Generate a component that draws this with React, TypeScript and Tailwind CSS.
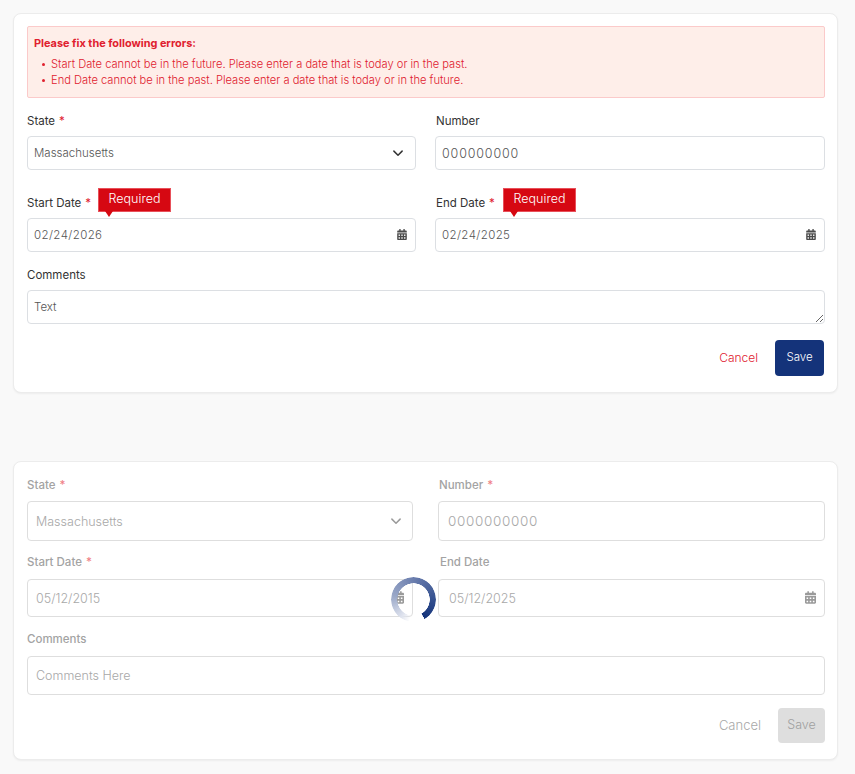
import React from "react";
import { FaCalendarAlt } from "react-icons/fa";

function Chevron({ className }: { className: string }) {
  return (
    <svg viewBox="0 0 16 16" className={className} fill="none" stroke="currentColor" strokeWidth="2" strokeLinecap="round" strokeLinejoin="round">
      <path d="M2.5 5.5 8 11l5.5-5.5" />
    </svg>
  );
}

function Tip({ className }: { className: string }) {
  return (
    <div className={`absolute top-[-30px] z-10 flex h-[24px] w-[73px] items-center justify-center border border-[#e8505a] bg-[#d60812] pb-[1px] text-[12.5px] font-light text-white ${className}`}>
      Required
      <span className="absolute bottom-[-6px] left-[6px] h-0 w-0 border-x-[4px] border-t-[6px] border-x-transparent border-t-[#d60812]" />
    </div>
  );
}

function Label({ text, req, muted }: { text: string; req?: boolean; muted?: boolean }) {
  return (
    <div className={`flex h-4 items-center text-[11.5px] leading-4 ${muted ? "font-medium text-[#a3a3a3]" : "text-[#333333]"}`}>
      {text}
      {req && <span className={`${muted ? "ml-1 text-[#ef7f86]" : "ml-1 text-[#e0202e]"}`}>*</span>}
    </div>
  );
}

function ErrorAlert() {
  return (
    <div className="h-[72px] rounded-[2px] border border-[#fbcaca] bg-[#feeee9] pl-[6px] pt-[8px] text-[11.15px] font-light leading-4 text-[#e0202e]">
      <div className="text-[10.9px] font-bold">Please fix the following errors:</div>
      <ul className="mt-[5px] pl-[17px]">
        <li className="relative">
          <span className="absolute left-[-9px] top-[7px] h-[3px] w-[3px] rounded-full bg-[#e0202e]" />
          Start Date cannot be in the future. Please enter a date that is today or in the past.
        </li>
        <li className="relative">
          <span className="absolute left-[-9px] top-[7px] h-[3px] w-[3px] rounded-full bg-[#e0202e]" />
          End Date cannot be in the past. Please enter a date that is today or in the future.
        </li>
      </ul>
    </div>
  );
}

function Spinner() {
  return (
    <div className="absolute left-[376.5px] top-[114.5px] z-10 h-[45px] w-[45px] rounded-full bg-[conic-gradient(from_190deg,#ffffff00_0deg,#dfe3ee_25deg,#9aa8c8_90deg,#6b7eae_170deg,#34508f_260deg,#14337a_320deg,#ffffff00_321deg)] [mask:radial-gradient(circle,transparent_16px,black_16.5px)]" />
  );
}

const box1 = "h-[34px] w-full rounded-[4px] border border-[#dcdfe3] bg-white px-[6px] font-light text-[#555555] outline-none";
const box2 = "w-full rounded-[4px] border border-[#dedede] bg-white px-[8px] font-light text-[#a8a8a8] outline-none placeholder:text-[#a8a8a8]";

export default function App() {
  return (
    <div className="min-h-screen bg-[#f9f9f9] pl-[13px] pr-[17px] pt-[13px] font-['Inter',sans-serif]">
      <div className="rounded-lg border border-[#ececec] bg-white pb-[16px] pl-[13px] pr-[12px] pt-[12px] shadow-[0_1px_2px_rgba(0,0,0,0.05)]">
        <ErrorAlert />
        <div className="mt-[15px] grid grid-cols-[389px_390px] gap-x-[19px]">
          <div>
            <Label text="State" req />
            <div className="relative mt-[7px]">
              <input readOnly value="Massachusetts" className={`${box1} text-[11.5px]`} />
              <Chevron className="absolute right-[12px] top-[11px] h-[12px] w-[12px] text-[#333333]" />
            </div>
          </div>
          <div>
            <div className="pl-[1px]">
              <Label text="Number" />
            </div>
            <div className="mt-[7px]">
              <input readOnly value="000000000" className={`${box1} text-[12.5px] tracking-[0.85px]`} />
            </div>
          </div>
          <div className="mt-[25px]">
            <Label text="Start Date" req />
            <div className="relative mt-[7px]">
              <Tip className="left-[71px]" />
              <input readOnly value="02/24/2026" className={`${box1} text-[11.5px] tracking-[0.4px]`} />
              <FaCalendarAlt className="absolute right-[9px] top-[11px] h-[11px] w-[10px] text-[#4b4b4b]" />
            </div>
          </div>
          <div className="mt-[25px]">
            <div className="pl-[1px]">
              <Label text="End Date" req />
            </div>
            <div className="relative mt-[7px]">
              <Tip className="left-[68px]" />
              <input readOnly value="02/24/2025" className={`${box1} text-[11.5px] tracking-[0.4px]`} />
              <FaCalendarAlt className="absolute right-[9px] top-[11px] h-[11px] w-[10px] text-[#4b4b4b]" />
            </div>
          </div>
        </div>
        <div className="mt-[15px]">
          <Label text="Comments" />
          <textarea readOnly value="Text" className="mt-[7px] block h-[34px] w-full rounded-[4px] border border-[#dcdfe3] bg-white px-[6px] py-[8px] text-[11.5px] font-light leading-4 text-[#555555] outline-none" />
        </div>
        <div className="mr-[1px] mt-[16px] flex items-center justify-end">
          <button className="text-[12px] font-light text-[#e0202e]">Cancel</button>
          <button className="ml-[17px] h-[36px] w-[49px] rounded-[4px] bg-[#14337a] text-[11.5px] font-light text-white">Save</button>
        </div>
      </div>

      <div className="relative mt-[68px] rounded-lg border border-[#ececec] bg-white pb-[16px] pl-[13px] pr-[12px] pt-[15px] shadow-[0_1px_2px_rgba(0,0,0,0.05)]">
        <Spinner />
        <div className="grid grid-cols-[386px_387px] gap-x-[25px]">
          <div>
            <Label text="State" req muted />
            <div className="relative mt-[8px]">
              <input readOnly value="Massachusetts" className={`${box2} h-[40px] text-[12.5px]`} />
              <Chevron className="absolute right-[11px] top-[14px] h-[12px] w-[12px] text-[#9a9a9a]" />
            </div>
          </div>
          <div>
            <div className="pl-[1px]">
              <Label text="Number" req muted />
            </div>
            <div className="mt-[8px]">
              <input readOnly value="0000000000" className={`${box2} h-[40px] pl-[9px] text-[13.5px] tracking-[0.66px]`} />
            </div>
          </div>
          <div className="mt-[13px]">
            <Label text="Start Date" req muted />
            <div className="relative mt-[9px]">
              <input readOnly value="05/12/2015" className={`${box2} h-[38px] text-[12.5px]`} />
              <FaCalendarAlt className="absolute right-[9px] top-[12px] h-[13px] w-[11px] text-[#9a9a9a]" />
            </div>
          </div>
          <div className="mt-[13px]">
            <div className="pl-[2px]">
              <Label text="End Date" muted />
            </div>
            <div className="relative mt-[9px]">
              <input readOnly value="05/12/2025" className={`${box2} h-[38px] pl-[10px] text-[12.5px]`} />
              <FaCalendarAlt className="absolute right-[9px] top-[12px] h-[13px] w-[11px] text-[#9a9a9a]" />
            </div>
          </div>
        </div>
        <div className="mt-[14px]">
          <Label text="Comments" muted />
          <input readOnly placeholder="Comments Here" className={`${box2} mt-[9px] block h-[39px] text-[12.5px]`} />
        </div>
        <div className="mt-[13px] flex items-center justify-end">
          <button className="text-[13px] font-light text-[#a8a8a8]">Cancel</button>
          <button className="ml-[17px] h-[35px] w-[47px] rounded-[4px] bg-[#dedede] text-[12.5px] font-light text-[#a0a0a0]">Save</button>
        </div>
      </div>
    </div>
  );
}
